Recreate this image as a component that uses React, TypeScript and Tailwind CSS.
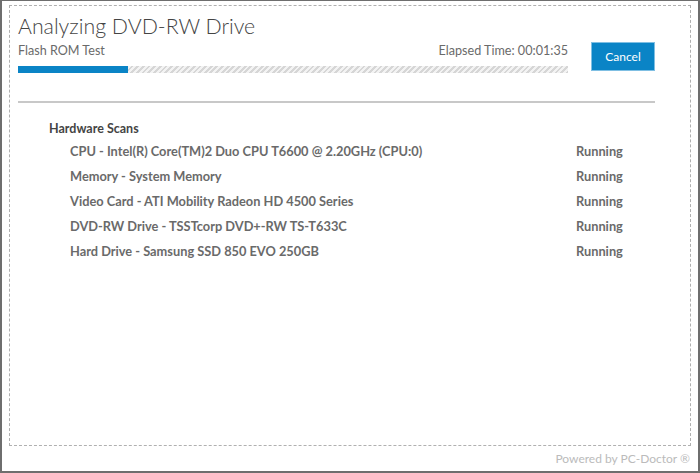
const scans = [
  'CPU - Intel(R) Core(TM)2 Duo CPU T6600 @ 2.20GHz (CPU:0)',
  'Memory - System Memory',
  'Video Card - ATI Mobility Radeon HD 4500 Series',
  'DVD-RW Drive - TSSTcorp DVD+-RW TS-T633C',
  'Hard Drive - Samsung SSD 850 EVO 250GB',
];

export default function App() {
  return (
    <div
      className="w-[700px] h-[473px] bg-white border-[#6e6e6e] border-l-2 border-r-2 border-t border-b-2 flex flex-col"
      style={{ fontFamily: 'Lato, "Open Sans", sans-serif' }}
    >
      {/* Dashed panel */}
      <div className="ml-[7px] mr-[7px] mt-[4px] h-[441px] border border-dashed border-[#b0b0b0] pl-[8px] pr-[35px] flex flex-col">
        <h1 className="pt-[7px] text-[21.3px] leading-[26px] font-light text-[#444]">Analyzing DVD-RW Drive</h1>

        <div className="flex items-start mt-[3px]">
          <div className="flex-1 flex flex-col">
            <div className="flex justify-between text-[12.6px] leading-[18px] text-[#6a6a6a]">
              <span>Flash ROM Test</span>
              <span>Elapsed Time: 00:01:35</span>
            </div>
            <div className="mt-[6px] h-[7px] flex bg-[repeating-linear-gradient(135deg,#d6d6d6_0_2px,#f3f3f3_2px_4px)]">
              <div className="w-[110px] h-full bg-[#0a84c6]" />
            </div>
          </div>
          <button className="ml-[23px] w-[64px] h-[29px] bg-[#0a84c6] border border-[#7fbfe3] text-white text-[12px]">
            Cancel
          </button>
        </div>

        <div className="mt-[28px] h-[2px] bg-[#c8c8c8]" />

        <div className="pl-[31px] pt-[17px]">
          <div className="text-[12.5px] leading-[17px] font-bold text-[#444]">Hardware Scans</div>
          <div className="flex flex-col mt-[2px]">
            {scans.map((s) => (
              <div key={s} className="flex h-[25px] items-center text-[12.8px] font-bold text-[#6a6a6a]">
                <span className="pl-[21px] w-[527px]">{s}</span>
                <span>Running</span>
              </div>
            ))}
          </div>
        </div>
      </div>

      <div className="flex-1 flex items-center justify-end pr-[8px] text-[12px] text-[#bbbbbb]">
        Powered by PC-Doctor ®
      </div>
    </div>
  );
}
